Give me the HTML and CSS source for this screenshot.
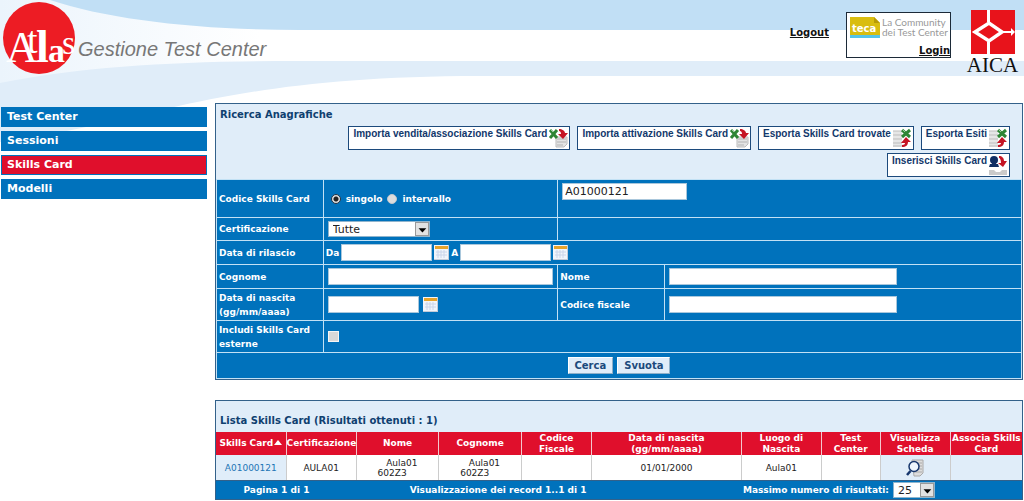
FILE: index.html
```html
<!DOCTYPE html>
<html lang="it">
<head>
<meta charset="utf-8">
<title>Atlas - Gestione Test Center</title>
<link rel="stylesheet" href="styles.css">
</head>
<body>
<svg class="waves" aria-hidden="true">
  <defs>
    <linearGradient id="fade" gradientUnits="userSpaceOnUse" x1="0" y1="0" x2="260" y2="0"><stop offset="0" stop-color="#ebf4fc"/><stop offset="1" stop-color="#fff"/></linearGradient>
  </defs>
  <rect width="260" height="90" fill="url(#fade)"/>
  <path d="M50 0C110 20 200 30 300 30H4000V0Z" fill="#c1dff5"/>
  <path d="M0 83C90 65 190 61 300 61H4000V76H480C330 76 240 92 170 108C110 122 60 134 0 142Z" fill="#e0edf9"/>
</svg>
<header class="header">
  <div class="brand">
    <svg class="atlas" viewBox="0 0 76 76" role="img" aria-label="Atlas">
      <circle cx="39" cy="38" r="36" fill="#ed1c24"/>
      <text fill="#fff" font-family="Liberation Serif, serif"><tspan x="6" y="62" font-size="44">A</tspan><tspan x="27" y="53" font-size="38">t</tspan><tspan x="36" y="62" font-size="46" font-weight="bold">l</tspan><tspan x="48" y="62" font-size="34" font-weight="bold">a</tspan><tspan x="62" y="54" font-size="34">s</tspan></text>
    </svg>
    <span class="tagline">Gestione Test Center</span>
  </div>
  <a class="top-link logout" href="#">Logout</a>
  <div class="community">
    <div class="community-row">
      <svg class="teca" viewBox="0 0 31 21" role="img" aria-label="teca">
        <path d="M1 0H25L31 6V18H1Z" fill="#d9bd10"/>
        <path d="M25 0L31 6H25Z" fill="#b79b06"/>
        <path d="M1 18H31V21H1Z" fill="#55c4ea"/>
        <text x="3" y="15" fill="#fff" font-family="DejaVu Sans, sans-serif" font-weight="bold" font-size="10">teca</text>
      </svg>
      <span class="community-text">La Community<br>dei Test Center</span>
    </div>
    <a class="top-link" href="#">Login</a>
  </div>
  <div class="aica">
    <svg class="aica-mark" viewBox="0 0 44 44" aria-hidden="true">
      <path d="M0 0H44V44H0Z" fill="#e8131b"/>
      <path d="M17.500 0V12M17.500 32V44" stroke="#fff" stroke-width="3"/>
      <path d="M32 22H43" stroke="#fff" stroke-width="2"/>
      <path d="M4 22L18 13L31 22L18 31Z" fill="none" stroke="#fff" stroke-width="3.500"/>
      <path d="M40 18L44 22L40 26Z" fill="#fff"/>
    </svg>
    <span>AICA</span>
  </div>
</header>

<svg class="symbols" aria-hidden="true">
  <symbol id="import" viewBox="0 0 20 20">
    <path d="M8 9H19V16L16 19H8Z" fill="#e4e4e4" stroke="#bdbdbd"/><path d="M9 11H18M9 14H18M9 17H15" stroke="#b4b4b4"/>
    <path d="M2 2L9 10M9 2L2 10" stroke="#2e8535" stroke-width="3"/><path d="M2 1L5 4" stroke="#9acb9c"/>
    <path d="M11 1C14 1 17 3 17 5H20L15 11L10 6H13C13 4 12 3 11 3Z" fill="#c51424"/>
  </symbol>
  <symbol id="export" viewBox="0 0 20 20">
    <path d="M1 3H10V19H1Z" fill="#e6e6e6"/><path d="M1 3H10M1 7H10M1 11H10M1 15H10M1 18H10" stroke="#bdbdbd"/>
    <path d="M10 2L18 9M18 2L10 9" stroke="#2e8535" stroke-width="3"/><path d="M10 1L13 4" stroke="#9acb9c"/>
    <path d="M9 15L14 9L19 14H16C16 17 14 19 10 19V17C12 17 13 16 13 15Z" fill="#c51424"/>
  </symbol>
  <symbol id="insert" viewBox="0 0 20 20">
    <path d="M1 15H6L8 17H12L14 15H19V20H1Z" fill="#cacaca"/>
    <circle cx="6" cy="5" r="4" fill="#102e63"/><path d="M4 7H8V9H10L11 12H1L2 9H4Z" fill="#102e63"/>
    <path d="M11 1C14 1 16 3 16 6H19L15 12L10 8H13C13 5 12 3 11 3Z" fill="#c51424"/>
  </symbol>
  <symbol id="calendar" viewBox="0 0 15 15">
    <path d="M0 0H15V15H0Z" fill="#f1f5fb"/><path d="M1 1H14V4H1Z" fill="#e7a42c"/>
    <path d="M2 7H13M2 10H13M4 5V13M7 5V13M10 5V13" stroke="#cad5ea"/><path d="M0 14.500H15M14.500 0V15" stroke="#c3cbd8"/>
  </symbol>
</svg>

<div class="layout">
  <nav class="nav">
    <a href="#">Test Center</a>
    <a href="#">Sessioni</a>
    <a href="#" class="active">Skills Card</a>
    <a href="#">Modelli</a>
  </nav>
  <main class="main">
    <form class="panel">
      <h2 class="search-title">Ricerca Anagrafiche</h2>
      <div class="actions">
        <button type="button">Importa vendita/associazione Skills Card <svg><use href="#import"/></svg></button>
        <button type="button">Importa attivazione Skills Card <svg><use href="#import"/></svg></button>
        <button type="button">Esporta Skills Card trovate <svg><use href="#export"/></svg></button>
        <button type="button">Esporta Esiti <svg><use href="#export"/></svg></button>
        <button type="button">Inserisci Skills Card <svg><use href="#insert"/></svg></button>
      </div>
      <table class="fields">
        <colgroup><col class="c-label"><col class="c-wide"><col class="c-label"><col></colgroup>
        <tr class="r-code">
          <th><label for="code">Codice Skills Card</label></th>
          <td><div class="line radios"><input type="radio" name="mode" id="single" checked><label for="single">singolo</label><input type="radio" name="mode" id="range"><label for="range">intervallo</label></div></td>
          <td colspan="2" class="top"><input class="text w-code" id="code" type="text" value="A01000121"></td>
        </tr>
        <tr class="r-short">
          <th><label for="cert">Certificazione</label></th>
          <td><span class="select w-cert"><select id="cert"><option>Tutte</option></select><svg viewBox="0 0 14 14"><path d="M3 6H12L7.500 11Z"/></svg></span></td>
          <td colspan="2"></td>
        </tr>
        <tr class="r-mid">
          <th>Data di rilascio</th>
          <td colspan="3" class="flush"><div class="line dates"><label for="from">Da</label><input class="text w-date" id="from" type="text"><svg class="cal"><use href="#calendar"/></svg><label for="to">A</label><input class="text w-date" id="to" type="text"><svg class="cal"><use href="#calendar"/></svg></div></td>
        </tr>
        <tr class="r-mid">
          <th><label for="surname">Cognome</label></th>
          <td><input class="text w-name" id="surname" type="text"></td>
          <th><label for="name">Nome</label></th>
          <td><input class="text w-name" id="name" type="text"></td>
        </tr>
        <tr class="r-tall">
          <th><label for="birth">Data di nascita (gg/mm/aaaa)</label></th>
          <td><div class="line"><input class="text w-date" id="birth" type="text"><svg class="cal"><use href="#calendar"/></svg></div></td>
          <th><label for="tax">Codice fiscale</label></th>
          <td><input class="text w-name" id="tax" type="text"></td>
        </tr>
        <tr class="r-tall">
          <th><label for="ext">Includi Skills Card esterne</label></th>
          <td colspan="3"><input type="checkbox" id="ext"></td>
        </tr>
        <tr class="r-submit">
          <td colspan="4"><div class="submit"><button type="button">Cerca</button><button type="button">Svuota</button></div></td>
        </tr>
      </table>
    </form>

    <section class="panel">
      <h2 class="list-title">Lista Skills Card (Risultati ottenuti : 1)</h2>
      <table class="list">
        <colgroup><col class="l-70"><col class="l-70"><col class="l-83"><col class="l-83"><col class="l-70"><col class="l-150"><col class="l-80"><col class="l-59"><col class="l-70"><col></colgroup>
        <thead>
          <tr>
            <th class="nowrap">Skills Card<svg class="sort" viewBox="0 0 8 6"><path d="M0 5L4 0L8 5Z"/></svg></th>
            <th class="nowrap">Certificazione</th><th>Nome</th><th>Cognome</th><th>Codice<br>Fiscale</th><th>Data di nascita<br>(gg/mm/aaaa)</th><th>Luogo di<br>Nascita</th><th>Test<br>Center</th><th>Visualizza<br>Scheda</th><th>Associa Skills<br>Card</th>
          </tr>
        </thead>
        <tbody>
          <tr>
            <td class="tint"><a href="#">A01000121</a></td><td>AULA01</td>
            <td><span class="pair">&nbsp;&nbsp; Aula01<br>602Z3</span></td><td><span class="pair">&nbsp;&nbsp; Aula01<br>602Z3</span></td>
            <td></td><td>01/01/2000</td><td>Aula01</td><td></td>
            <td class="tint"><svg class="view" viewBox="0 0 18 18" role="img" aria-label="Visualizza"><path d="M6 1H17V14L14 17H8Z" fill="#ddd" stroke="#aaa"/><path d="M7 4H16M8 7H16M8 10H16M8 13H16" stroke="#aaa"/><circle cx="8" cy="7.500" r="5" fill="#edf5fd" stroke="#16366d" stroke-width="1.500"/><path d="M4.500 12L1 16" stroke="#16366d" stroke-width="2.500"/></svg></td>
            <td class="tint"></td>
          </tr>
        </tbody>
      </table>
      <div class="pager">
        <span>Pagina 1 di 1</span>
        <span>Visualizzazione dei record 1..1 di 1</span>
        <span class="max"><label for="max">Massimo numero di risultati:</label><span class="select w-max"><select id="max"><option>25</option></select><svg viewBox="0 0 14 14"><path d="M3 6H12L7.500 11Z"/></svg></span></span>
      </div>
    </section>
  </main>
</div>
</body>
</html>
```
FILE: styles.css
```css
* { box-sizing: border-box; }
body { margin: 0; background: #fff; font-family: "DejaVu Sans", Verdana, sans-serif; font-size: 9px; color: #222; }
button, input, select { font-family: inherit; margin: 0; }
h2 { margin: 0; color: #0f4070; font-size: 10px; line-height: 14px; }
svg { display: block; }
.symbols { display: none; }
.waves { position: absolute; top: 0; left: 0; z-index: -1; width: 100%; height: 150px; }

.header { display: flex; align-items: flex-start; height: 103px; padding-right: 4px; }
.brand { display: flex; flex: 1; align-items: flex-start; }
.atlas { width: 76px; height: 76px; }
.tagline { margin: 37px 0 0 2px; color: #777; font: italic 20px/24px "Liberation Sans", Arial, sans-serif; white-space: nowrap; }
.top-link { color: #111; font-weight: bold; font-size: 10px; line-height: 12px; }
.logout { margin: 27px 17px 0 0; }
.community { display: flex; flex-direction: column; align-items: flex-end; justify-content: space-between; width: 105px; height: 46px; margin: 12px 14px 0 0; padding-top: 4px; border: 1px solid #1c2a38; background: #fff; }
.community-row { display: flex; gap: 2px; width: 100%; padding-left: 2px; }
.teca { width: 31px; height: 21px; flex: none; }
.community-text { color: #999; font: 10px/10px Lato, "Open Sans", sans-serif; white-space: nowrap; }
.aica { display: flex; flex-direction: column; align-items: center; width: 55px; margin-top: 10px; color: #111; font: 21px/22px "Liberation Serif", serif; }
.aica-mark { width: 44px; height: 44px; }

.layout { display: flex; gap: 8px; padding: 0 1px; }
.nav { display: flex; flex-direction: column; gap: 4px; width: 206px; flex: none; padding-top: 4px; }
.nav a { height: 20px; padding-left: 5px; border: 1px solid #0072bc; background: #0072bc; color: #fff; font-weight: bold; font-size: 11px; line-height: 18px; text-decoration: none; }
.nav a.active { background: #e00f2c; }
.main { display: flex; flex-direction: column; gap: 20px; flex: 1; min-width: 0; }
.panel { border: 1px solid #33618a; background: #e0edf9; }
.search-title { padding: 4px 4px 0; }
.actions { display: flex; flex-wrap: wrap; justify-content: flex-end; gap: 3px 7px; padding: 4px 12px 2px 100px; }
.actions button { display: flex; gap: 1px; height: 24px; padding: 1px 1px 0 4px; border: 1px solid #1c4a7c; background: #fff; color: #12386b; font: bold 10px/12px "Liberation Sans", Arial, sans-serif; white-space: nowrap; }
.actions svg { width: 20px; height: 20px; }

.fields, .list { width: 100%; border-collapse: collapse; table-layout: fixed; }
.fields { background: #0072bc; color: #fff; }
.fields th, .fields td { padding: 0 4px; border: 1px solid #c2e1f5; text-align: left; }
.fields th { padding: 0 2px; font-size: 9px; line-height: 14px; }
.fields td.top { padding-top: 3px; vertical-align: top; }
.fields td.flush { padding-left: 2px; }
.c-label { width: 13.25%; }
.c-wide { width: 29.15%; }
.r-code { height: 38px; }
.r-short { height: 23px; }
.r-mid { height: 24px; }
.r-tall { height: 32px; }
.r-submit { height: 26px; }
.line { display: flex; align-items: center; gap: 4px; font-weight: bold; line-height: 12px; }
.dates { gap: 2px; }
.cal { width: 15px; height: 15px; }
.text { display: block; height: 17px; padding: 0 2px; border: 1px solid #a9c7dc; background: #fff; color: #222; font-size: 11px; }
.w-code { width: 125px; }
.w-date { width: 91px; }
.w-name { width: 228px; max-width: 100%; }
.radios { gap: 5px; padding-left: 3px; }
input[type="radio"] { appearance: none; width: 10px; height: 10px; border: 1px solid #c2c8cd; border-radius: 50%; background: #ddd; }
input[type="radio"]:checked { background: radial-gradient(circle, #222 2px, #ddd 3px); border-color: #234; }
input[type="checkbox"] { appearance: none; display: block; width: 11px; height: 11px; border: 1px solid #f5f5f5; background: #d8d8d8; }
.select { display: flex; align-items: center; height: 16px; border: 1px solid #8fb4cd; background: #fff; }
.select select { flex: 1; min-width: 0; height: 14px; padding: 0 4px; border: 0; appearance: none; background: none; color: #222; font-size: 11px; }
.select svg { width: 14px; height: 14px; border: 1px solid #999; background: #e2e2e2; }
.w-cert { width: 102px; }
.w-max { width: 42px; }
.submit { display: flex; justify-content: center; gap: 4px; }
.submit button { height: 17px; padding: 0 6px; border: 1px solid; border-color: #fff #8fb0c8 #8fb0c8 #fff; background: #e0edf9; color: #1c4a7c; font-weight: bold; font-size: 10px; line-height: 14px; }

.list-title { padding: 13px 4px 4px; }
.list { background: #fff; text-align: center; }
.list th { height: 23px; padding: 0; border-left: 1px solid #f3c6cd; background: #e00f2c; color: #fff; font-size: 9px; line-height: 11px; }
.list th:first-child, .list td:first-child { border-left: 0; }
.list td { height: 25px; padding: 0; border-left: 1px solid #ccc; line-height: 10px; }
.list td.tint { background: #e0edf9; }
.list a { color: #1d75b5; text-decoration: none; }
.nowrap { white-space: nowrap; }
.pair { display: inline-block; text-align: left; }
.sort { display: inline-block; width: 8px; height: 6px; margin-left: 1px; fill: #fff; }
.view { width: 18px; height: 18px; margin: 0 auto; }
.l-70 { width: 8.7%; }
.l-83 { width: 10.25%; }
.l-150 { width: 18.6%; }
.l-80 { width: 9.9%; }
.l-59 { width: 7.3%; }
.pager { display: grid; grid-template-columns: 15% 40% 1fr; align-items: center; height: 19px; border-top: 1px solid #33618a; background: #0072bc; color: #fff; font-weight: bold; text-align: center; }
.max { display: flex; align-items: center; justify-content: flex-end; gap: 4px; padding-right: 24%; white-space: nowrap; }
```
